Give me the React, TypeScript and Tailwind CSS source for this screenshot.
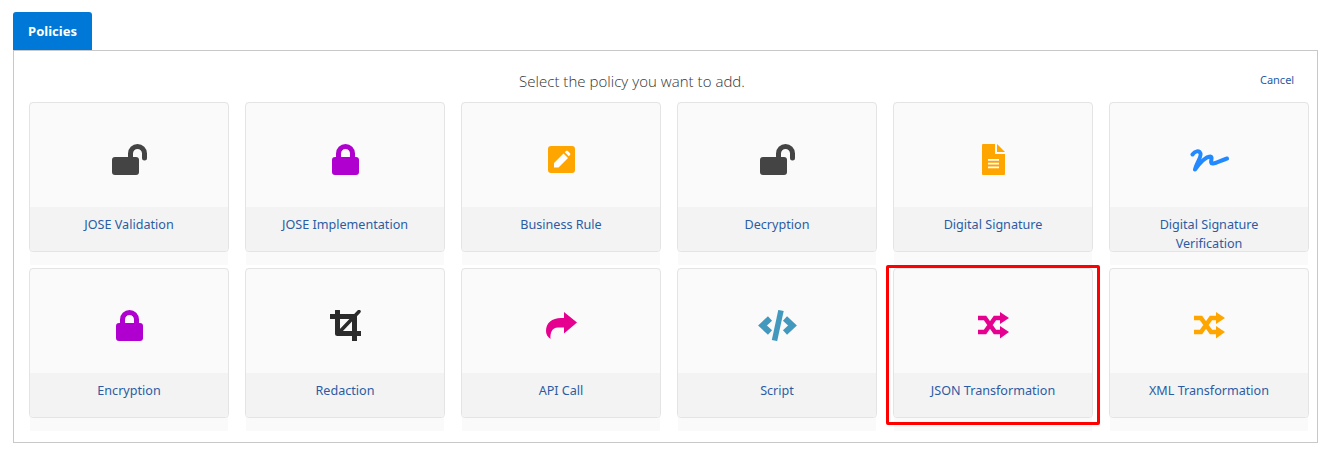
import React from "react";

const Unlock = () => (
  <svg width="35" height="31" viewBox="0 0 35 31">
    <rect x="0" y="13" width="27" height="18" rx="3" fill="#444444" />
    <path d="M18.500 14V9.500a7 7 0 0 1 14 0V14" fill="none" stroke="#444444" strokeWidth="5" strokeLinecap="round" />
  </svg>
);

const Lock = () => (
  <svg width="27" height="31" viewBox="0 0 27 31">
    <rect x="0" y="13" width="27" height="18" rx="3" fill="#b000d0" />
    <path d="M6.500 14V9.500a7 7 0 0 1 14 0V14" fill="none" stroke="#b000d0" strokeWidth="5" />
  </svg>
);

const PenSquare = () => (
  <svg width="27" height="27" viewBox="0 0 27 27">
    <rect width="27" height="27" rx="3" fill="#ffa500" />
    <path d="M6 21.500V17L15.500 7.500L20 12L10.500 21.500ZM16.800 6.200L18 5C18.600 4.500 19.200 4.500 19.800 5L22 7.200C22.500 7.800 22.500 8.400 22 9L20.800 10.200Z" fill="#ffffff" />
  </svg>
);

const FileDoc = () => (
  <svg width="23" height="31" viewBox="0 0 23 31">
    <path d="M1 0H13V10H23V30a1 1 0 0 1-1 1H1a1 1 0 0 1-1-1V1a1 1 0 0 1 1-1ZM15 0L23 8H15Z" fill="#ffa500" />
    <path d="M6 15h11v1.800H6ZM6 18.800h11v1.800H6ZM6 22.400h11v1.800H6Z" fill="#ffffff" />
  </svg>
);

const Signature = () => (
  <svg width="39" height="24" viewBox="0 0 39 24">
    <path d="M2.500 6.500C5 3 9 2 10.500 5.500C11.500 9 6 16 5 21.500C9 16 15 9 20 8.500C24 8 18.500 16 23 15.500C27 15 32 12 37 10.500" fill="none" stroke="#2389ff" strokeWidth="4" strokeLinecap="round" strokeLinejoin="round" />
  </svg>
);

const Crop = () => (
  <svg width="31" height="31" viewBox="0 0 31 31">
    <path d="M0.500 6.500H24.500V30.500M7.500 1V23.500H30.500" fill="none" stroke="#2b2b2b" strokeWidth="5" strokeLinecap="round" strokeLinejoin="round" />
    <path d="M29 1.500L10 21.500" fill="none" stroke="#2b2b2b" strokeWidth="3.500" strokeLinecap="round" />
  </svg>
);

const Share = () => (
  <svg width="31" height="27" viewBox="0 0 31 27">
    <path d="M31 10.500L18 0V6H15C6 6 0 11 0 19C0 22 1.500 25 4.500 27C4 21 6 15.500 12 15.500H18V21.500Z" fill="#e6008f" />
  </svg>
);

const Code = () => (
  <svg width="39" height="31" viewBox="0 0 39 31">
    <path d="M12 8.500L4.500 15.500L12 22.500M27 8.500L34.500 15.500L27 22.500" fill="none" stroke="#4299bd" strokeWidth="6" />
    <path d="M23 0.500L16.500 30.500" fill="none" stroke="#4299bd" strokeWidth="5.500" />
  </svg>
);

const Shuffle = ({ color }: { color: string }) => (
  <svg width="31" height="27" viewBox="0 0 31 27">
    <path d="M0 6H7L17 20H24M0 20H7L17 6H24" fill="none" stroke={color} strokeWidth="4.500" />
    <path d="M22 0L31 6L22 12ZM22 14L31 20L22 26.500Z" fill={color} />
  </svg>
);

const policies: { label: string; icon: React.ReactNode }[] = [
  { label: "JOSE Validation", icon: <Unlock /> },
  { label: "JOSE Implementation", icon: <Lock /> },
  { label: "Business Rule", icon: <PenSquare /> },
  { label: "Decryption", icon: <Unlock /> },
  { label: "Digital Signature", icon: <FileDoc /> },
  { label: "Digital Signature Verification", icon: <Signature /> },
  { label: "Encryption", icon: <Lock /> },
  { label: "Redaction", icon: <Crop /> },
  { label: "API Call", icon: <Share /> },
  { label: "Script", icon: <Code /> },
  { label: "JSON Transformation", icon: <Shuffle color="#e6008f" /> },
  { label: "XML Transformation", icon: <Shuffle color="#ffa500" /> },
];

export default function App() {
  return (
    <div className="relative h-[462px] w-[1333px] overflow-hidden bg-white pt-3 pl-[13px] font-['Noto_Sans',sans-serif]">
      <div className="flex h-[39px] w-[79px] items-center justify-center rounded-t-[3px] bg-[#0078d7] text-[13px] font-bold text-white">
        Policies
      </div>
      <div className="-mt-px h-[393px] w-[1305px] border border-[#c8c8c8] pl-[15px]">
        <div className="flex h-[51px] items-start pt-[20px]">
          <div className="ml-[490px] font-['Open_Sans',sans-serif] text-[15px] leading-5 font-light tracking-[0.04px] text-[#333333]">
            Select the policy you want to add.
          </div>
          <div className="mt-px ml-[515px] text-[11px] leading-4 text-[#1f5ba8]">Cancel</div>
        </div>
        <div className="grid w-[1280px] grid-cols-6 gap-x-4 gap-y-[3px]">
          {policies.map((p) => (
            <div key={p.label} className="mx-px h-[163px] bg-[#fafafa]">
              <div className="-mx-px flex h-[150px] flex-col overflow-hidden rounded-[4px] border border-[#e4e4e4]">
                <div className="flex h-[104px] shrink-0 items-start justify-center pt-[41px]">
                  <div className="flex h-[31px] items-center justify-center">{p.icon}</div>
                </div>
                <div className="flex-1 bg-[#f3f3f3] px-7 pt-[8px] text-center text-[12.600px] leading-[19px] text-[#2b5ca3]">
                  {p.label}
                </div>
              </div>
            </div>
          ))}
        </div>
      </div>
      <div className="absolute top-[265px] left-[886px] h-[160px] w-[214px] rounded-[2px] border-[3px] border-[#fe0000]" />
    </div>
  );
}
